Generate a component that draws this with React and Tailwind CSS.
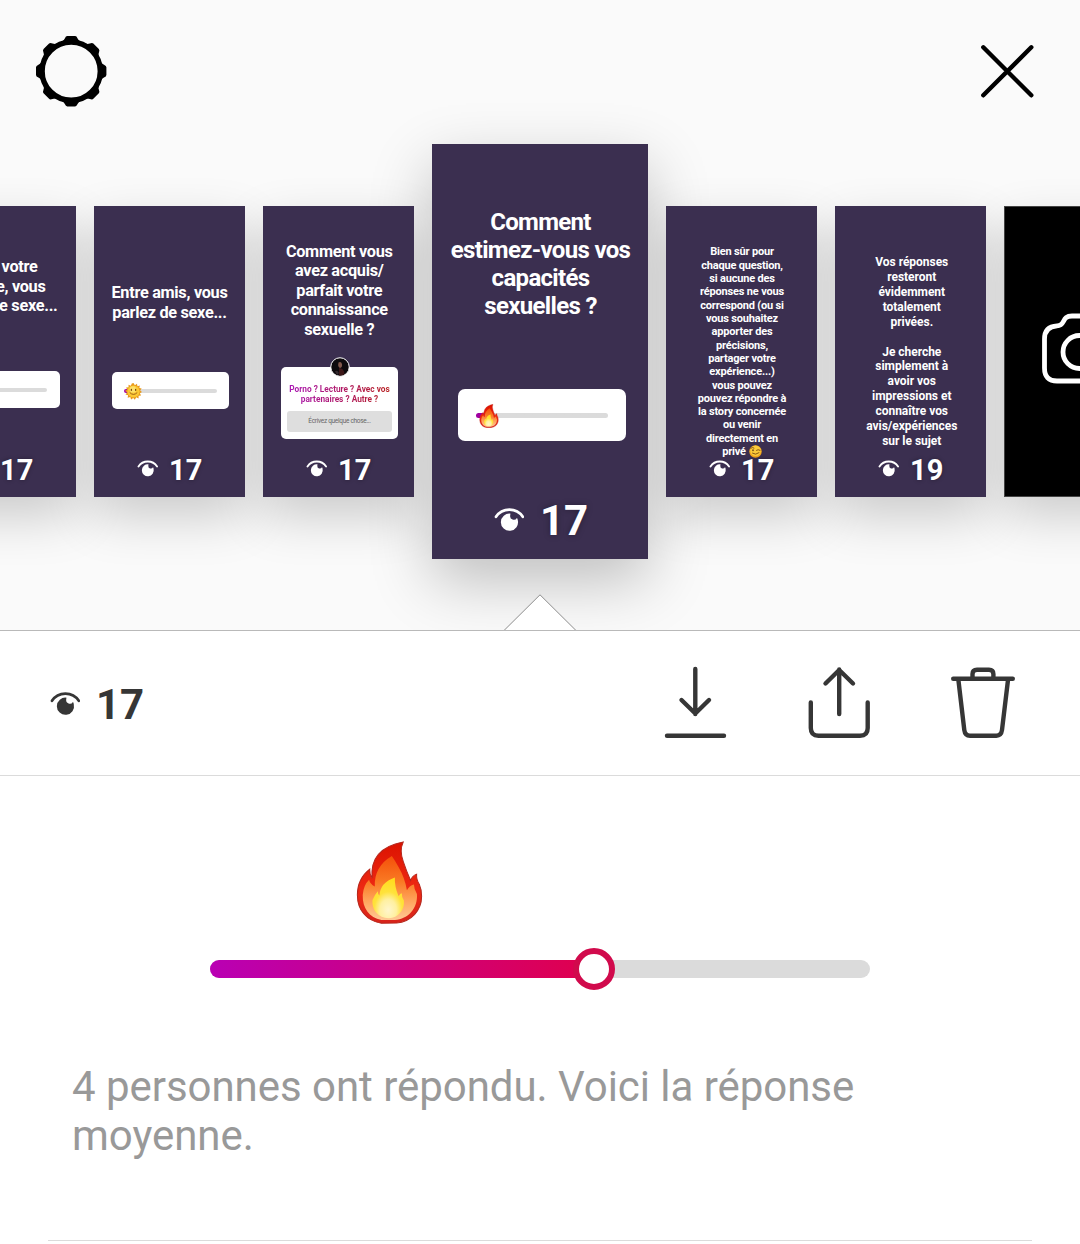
import React from "react";

function Gear() {
  const teeth = [0, 45, 90, 135, 180, 225, 270, 315];
  return (
    <svg className="size-[72px]" viewBox="0 0 72 72">
      <circle cx="36.2" cy="36.2" r="29.1" fill="none" stroke="#000" strokeWidth="5.4" />
      {teeth.map((a) => (
        <path
          key={a}
          transform={`rotate(${a} 36.2 36.2)`}
          d="M23.5 8Q28.2 6.8 29.8 3.4Q30.8 1 32.3 1H40.1Q41.6 1 42.6 3.4Q44.2 6.8 48.9 8L44.4 10Q36.2 8.2 28 10Z"
        />
      ))}
    </svg>
  );
}

function Close() {
  return (
    <svg className="size-[54px]" viewBox="0 0 54 54" fill="none" stroke="#000" strokeWidth="4.4" strokeLinecap="round">
      <path d="M3.3 3.3L51.3 51.3M51.3 3.3L3.3 51.3" />
    </svg>
  );
}

function Eye({ className }) {
  return (
    <svg className={className} viewBox="0 0 30 26" fill="none">
      <path d="M2 10.8C8.2 1.2 22.6 1.2 28.8 10.8" stroke="currentColor" strokeWidth="2.7" strokeLinecap="round" />
      <path
        d="M16.6 7.7A8.6 8.6 0 1 0 23.8 14.2Q23.6 12.2 22.9 11.9A3.6 3.6 0 0 1 16.2 9.6Q16.1 8.5 16.6 7.7Z"
        fill="currentColor"
      />
    </svg>
  );
}

function Fire({ className, id }) {
  return (
    <svg className={className} viewBox="50 34 198 248">
      <defs>
        <linearGradient id={id + "o"} x1="0" y1="0" x2="0" y2="1">
          <stop offset="0" stopColor="#dc1200" />
          <stop offset=".6" stopColor="#ee2a14" />
          <stop offset="1" stopColor="#d6231a" />
        </linearGradient>
        <linearGradient id={id + "m"} x1="0" y1="0" x2="0" y2="1">
          <stop offset="0" stopColor="#f4500a" />
          <stop offset=".4" stopColor="#f97a24" />
          <stop offset=".7" stopColor="#ffa45c" />
          <stop offset="1" stopColor="#ffc894" />
        </linearGradient>
        <radialGradient id={id + "i"} cx=".5" cy=".8" r=".75">
          <stop offset="0" stopColor="#fff6cc" />
          <stop offset=".35" stopColor="#fff0a0" />
          <stop offset=".6" stopColor="#ffe23c" />
          <stop offset="1" stopColor="#ffdc1e" />
        </radialGradient>
      </defs>
      <path
        d="M190 37Q178 62 190 95Q200 125 212 152Q217 137 230 133Q229 150 238 163Q245 178 245 200C245 240 215 275 170 279L125 280C80 272 53 240 53 195C53 160 68 135 90 118Q89 133 97 145C93 100 110 52 190 37Z"
        fill={`url(#${id}o)`}
        stroke="#b5271d"
        strokeWidth="3"
      />
      <path
        d="M156 79Q165 92 176 112Q195 145 201 181Q208 168 222 164Q222 178 231 192C234 235 205 267 165 270L125 270C88 262 68 235 69 195Q72 165 88 150Q91 163 105 170Q103 110 156 79Z"
        fill={`url(#${id}m)`}
      />
      <path
        d="M165 143Q164 170 176 199Q181 190 186 190Q185 203 192 212C195 240 175 264 147 265C115 264 96 240 98 211Q104 195 114 184Q114 194 119 197Q121 158 165 143Z"
        fill={`url(#${id}i)`}
      />
    </svg>
  );
}

function Sun() {
  return (
    <svg className="absolute left-[13px] top-[11px] size-[17px]" viewBox="0 0 32 32">
      <path
        d="M16 0L18.6 4.2L22.5 1.2L23.5 6L28 4.6L27 9.3L31.4 10.3L28.6 14L32 17L28 19.5L30.3 23.6L25.5 24L25.6 29L21 27L18.6 31.5L15.5 28L11.4 31L10 26.5L5 27.8L5.8 23L1 21.6L4 18L0 14.8L4.2 12.5L2 8.4L6.7 8L6.6 3.4L11 5.2L12.8.8Z"
        fill="#e99a1c"
      />
      <circle cx="16" cy="16" r="11.5" fill="#fbc834" />
      <circle cx="15" cy="12" r="6" fill="#fde06a" />
      <ellipse cx="12" cy="13" rx="1.3" ry="2" fill="#7a4610" />
      <ellipse cx="20" cy="13" rx="1.3" ry="2" fill="#7a4610" />
      <path d="M9.5 18.5Q16 25 22.5 18.5" fill="none" stroke="#96581a" strokeWidth="1.7" strokeLinecap="round" />
    </svg>
  );
}

function Wink() {
  return (
    <svg className="ml-[3px] size-[13px]" viewBox="0 0 26 26">
      <circle cx="13" cy="13" r="12.5" fill="#f3a51c" />
      <circle cx="13" cy="11.5" r="10.5" fill="#fccb3a" />
      <path d="M3.5 6.5Q7 3.5 10 6M15 10.5Q18 8 22 10.5M7 16.5Q13 21 20 15.5" fill="none" stroke="#7a4a10" strokeWidth="1.8" strokeLinecap="round" />
      <ellipse cx="8" cy="10.5" rx="1.5" ry="2" fill="#5a340a" />
    </svg>
  );
}

function Avatar() {
  return (
    <svg className="absolute left-[49px] top-[-10px] size-[20px]" viewBox="0 0 40 40">
      <circle cx="20" cy="20" r="18.5" fill="#0d0a0d" stroke="#fff" strokeWidth="2" />
      <path d="M17 11Q22 8 24 14Q25 21 20 22Q15 20 17 11Z" fill="#80584c" />
      <path d="M18 22Q28 22 29 34Q24 38 18 37Z" fill="#3d1718" />
      <path d="M10 29Q14 25 18 32L14 36Z" fill="#34292e" />
    </svg>
  );
}

function Count({ value, big }) {
  return big ? (
    <div className="absolute left-[62px] top-[352px] flex items-center text-white">
      <Eye className="mb-[5px] h-[26px] w-[30px]" />
      <span className="ml-[16px] text-[42px] font-bold leading-[50px] [text-shadow:0_0_6px_rgba(0,0,0,.35)]">{value}</span>
    </div>
  ) : (
    <div className="absolute left-[43px] top-[246px] flex items-center text-white">
      <Eye className="mb-[4px] h-[18px] w-[21px]" />
      <span className="ml-[11px] text-[29px] font-bold leading-[36px] [text-shadow:0_0_4px_rgba(0,0,0,.35)]">{value}</span>
    </div>
  );
}

function Lines({ lines, className }) {
  return (
    <div className={`flex flex-col whitespace-nowrap font-bold text-white ${className}`}>
      {lines.map((l, i) => (
        <span key={i} className="whitespace-pre">{l || " "}</span>
      ))}
    </div>
  );
}

// Shadows sit behind every card so that they never darken a neighbour.
const smallShadow =
  "before:absolute before:inset-0 before:-z-10 before:shadow-[0_20px_50px_rgba(0,0,0,.19)] before:content-['']";
const bigShadow =
  "before:absolute before:inset-0 before:-z-10 before:shadow-[0_22px_58px_rgba(0,0,0,.24)] before:content-['']";

function Card({ children, value }) {
  return (
    <article className={`relative h-[291px] w-[151px] shrink-0 bg-[#3b2f50] ${smallShadow}`}>
      {children}
      <Count value={value} />
    </article>
  );
}

const title = "text-[16.3px] leading-[19.6px] tracking-[-0.3px]";

export default function App() {
  return (
    <main className="h-[1244px] w-[1080px] overflow-hidden bg-white font-['Roboto',sans-serif]">
      <section className="relative h-[631px] overflow-hidden border-b border-[#b9b9b9] bg-[#fafafa]">
        <header className="flex h-36 items-start justify-between pl-[35px] pr-[46px] pt-[35px]">
          <Gear />
          <div className="pt-[9px]">
            <Close />
          </div>
        </header>

        <div className="isolate -ml-[75px] flex h-[415px] items-center gap-[18px]">
          <Card value="17">
            <Lines
              className={`${title} items-end pr-[18.5px] pt-[51px]`}
              lines={[<span key="a" className="pr-[20px]">votre</span>, <span key="b" className="pr-[12px]">e, vous</span>, "e sexe..."]}
            />
            <div className="absolute left-[17px] top-[165px] flex h-[37px] w-[118px] items-center rounded-[5px] bg-white px-[13px]">
              <div className="h-[4px] w-full rounded-full bg-[#dbdbdb]" />
            </div>
          </Card>
          <Card value="17">
            <Lines className={`${title} items-center pt-[77px]`} lines={["Entre amis, vous", "parlez de sexe..."]} />
            <div className="absolute left-[18px] top-[166px] flex h-[37px] w-[117px] items-center rounded-[5px] bg-white px-[12px]">
              <div className="h-[4px] w-full rounded-full bg-linear-to-r from-[#a60aa5] from-5% to-[#dbdbdb] to-5%" />
              <Sun />
            </div>
          </Card>
          <Card value="17">
            <Lines
              className={`${title} items-center pl-[1.5px] pt-[35.5px]`}
              lines={["Comment vous", "avez acquis/", "parfait votre", "connaissance", "sexuelle ?"]}
            />
            <div className="absolute left-[18px] top-[161px] h-[72px] w-[117px] rounded-[5px] bg-white pt-[17px]">
              <Avatar />
              <p className="mx-auto flex w-[101px] flex-col items-center whitespace-nowrap bg-linear-to-r/srgb from-[#a916b4] to-[#b82222] bg-clip-text text-[8.3px] font-bold leading-[10px] text-transparent">
                <span>Porno ? Lecture ? Avec vos</span>
                <span>partenaires ? Autre ?</span>
              </p>
              <div className="mx-auto mt-[7px] h-[21px] w-[105px] rounded-[3px] bg-[#dedede] text-center text-[6.5px] leading-[21px] tracking-[-0.3px] text-[#666]">
                Écrivez quelque chose...
              </div>
            </div>
          </Card>

          <article className={`relative h-[415px] w-[216px] shrink-0 bg-[#3b2f50] ${bigShadow}`}>
            <Lines
              className="items-center pl-[1px] pt-[64px] text-[24px] leading-[28px] tracking-[-0.68px]"
              lines={["Comment", "estimez-vous vos", "capacités", "sexuelles ?"]}
            />
            <div className="absolute left-[26px] top-[245px] flex h-[52px] w-[168px] items-center rounded-[7px] bg-white px-[18px]">
              <div className="h-[5px] w-full rounded-full bg-linear-to-r from-[#a000a0] from-5% to-[#dbdbdb] to-15%" />
              <Fire id="fs" className="absolute left-[21px] top-[15px] h-[24px] w-[20px]" />
            </div>
            <Count value="17" big />
          </article>

          <Card value="17">
            <Lines
              className="items-center pl-[1px] pt-[39.4px] text-[11px] leading-[13.32px] tracking-[-0.18px]"
              lines={[
                "Bien sûr pour",
                "chaque question,",
                "si aucune des",
                "réponses ne vous",
                "correspond (ou si",
                "vous souhaitez",
                "apporter des",
                "précisions,",
                "partager votre",
                "expérience...)",
                "vous pouvez",
                "pouvez répondre à",
                "la story concernée",
                "ou venir",
                "directement en",
                <span key="w" className="flex items-center">privé<Wink /></span>,
              ]}
            />
          </Card>
          <Card value="19">
            <Lines
              className="items-center pl-[2.5px] pt-[48.8px] text-[12px] leading-[14.95px] tracking-[-0.03px]"
              lines={[
                "Vos réponses",
                "resteront",
                "évidemment",
                "totalement",
                "privées.",
                "",
                "Je cherche",
                "simplement à",
                "avoir vos",
                "impressions et",
                "connaître vos",
                "avis/expériences",
                "sur le sujet",
              ]}
            />
          </Card>
          <article className={`relative flex h-[291px] w-[151px] shrink-0 items-center border border-[#444] bg-black pb-[6px] pl-[37px] ${smallShadow}`}>
            <svg className="h-[71px] w-[76px] shrink-0" viewBox="0 0 76 71" fill="none" stroke="#fff" strokeWidth="4.8">
              <path d="M15 12.8C24 12.8 19 3 30 3H46C57 3 52 12.8 61 12.8Q73.5 13.5 73.5 26V55Q73.5 68 61 68H15Q2.5 68 2.5 55V26Q2.5 13.5 15 12.8Z" />
              <circle cx="37.5" cy="39" r="16.5" />
            </svg>
          </article>
        </div>

        <svg className="absolute bottom-[-1px] left-[503px] h-[37px] w-[74px]" viewBox="0 0 74 37">
          <path d="M1 36.5L37 .8L73 36.5V37H1Z" fill="#fff" />
          <path d="M1 36.5L37 .8L73 36.5" fill="none" stroke="#8c8c8c" strokeWidth="1" />
        </svg>
      </section>

      <section className="flex h-[145px] items-center justify-between border-b border-[#dbdbdb] pl-[50px] pr-[65px] text-[#363636]">
        <div className="flex items-center">
          <Eye className="h-[26px] w-[30px]" />
          <span className="ml-[16px] mt-1 text-[42px] font-bold leading-[50px]">17</span>
        </div>
        <div className="flex items-center gap-[80px] pb-[2px]">
          <svg className="h-[72px] w-[64px]" viewBox="0 0 64 72" fill="none" stroke="currentColor" strokeWidth="4.4" strokeLinecap="round" strokeLinejoin="round">
            <path d="M32.3 3V48M18.5 34L32.3 47.5L46 34M4 69.7H61" />
          </svg>
          <svg className="h-[72px] w-[64px]" viewBox="0 0 64 72" fill="none" stroke="currentColor" strokeWidth="4.4" strokeLinecap="round" strokeLinejoin="round">
            <path d="M32.2 48V3.5M18.5 17.5L32.2 4L46 17.5M3.8 36.5V62Q3.8 69.7 11.5 69.7H53Q60.7 69.7 60.7 62V36.5" />
          </svg>
          <svg className="h-[72px] w-[64px]" viewBox="0 0 64 72" fill="none" stroke="currentColor" strokeWidth="4.4" strokeLinecap="round">
            <path d="M2.2 12.7H61.8M21.5 12V8Q21.5 3.7 26 3.7H38Q42.4 3.7 42.4 8V12M7.4 14L13.3 64Q14 69.7 19 69.7H45.4Q50.2 69.7 51 64L57 14" />
          </svg>
        </div>
      </section>

      <section className="mx-12 h-[465px] border-b border-[#dbdbdb] pt-[65px]">
        <Fire id="fb" className="ml-[308px] h-[83px] w-[67px]" />
        <div className="relative ml-[162px] mt-[36px] h-[18px] w-[660px] rounded-full bg-[#dbdbdb]">
          <div className="h-full w-[384px] rounded-l-full bg-linear-to-r/srgb from-[#b900b4] to-[#e0004c]" />
          <div className="absolute left-[363px] top-[-12px] size-[42px] rounded-full border-[6px] border-[#d10a4c] bg-white" />
        </div>
        <p className="ml-6 mt-[84px] text-[42px] leading-[49px] tracking-[-0.04px] text-[#999]">
          4 personnes ont répondu. Voici la réponse
          <br />
          moyenne.
        </p>
      </section>
    </main>
  );
}
